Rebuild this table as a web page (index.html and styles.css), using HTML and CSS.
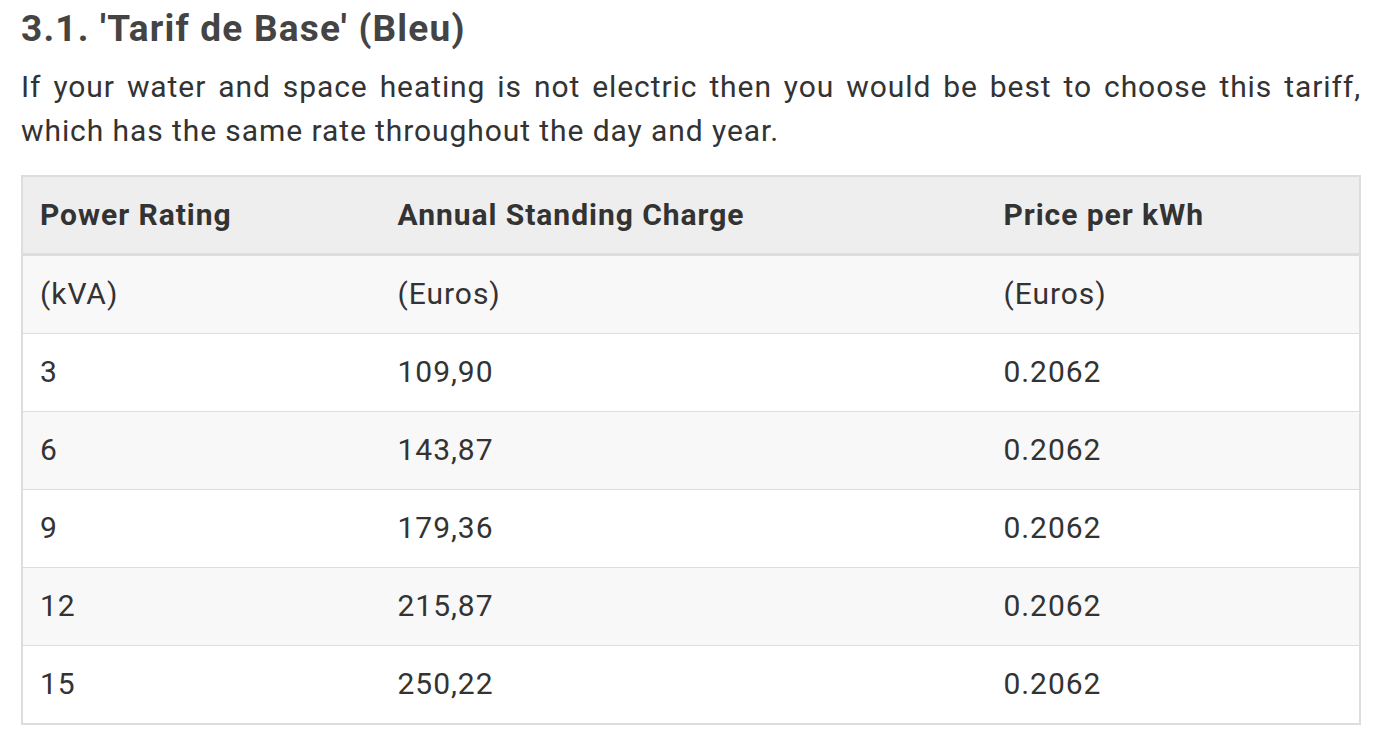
FILE: index.html
```html
<!DOCTYPE html>
<html lang="en">
<head>
<meta charset="utf-8">
<title>Tarif de Base</title>
<link rel="stylesheet" href="styles.css">
</head>
<body>
<div class="page">
  <h2 class="title">3.1. 'Tarif de Base' (Bleu)</h2>
  <p class="intro">If your water and space heating is not electric then you would be best to choose this tariff, which has the same rate throughout the day and year.</p>
  <table class="tariff">
    <colgroup>
      <col class="c1">
      <col class="c2">
      <col class="c3">
    </colgroup>
    <thead>
      <tr><th>Power Rating</th><th>Annual Standing Charge</th><th>Price per kWh</th></tr>
    </thead>
    <tbody>
      <tr><td>(kVA)</td><td>(Euros)</td><td>(Euros)</td></tr>
      <tr><td>3</td><td>109,90</td><td>0.2062</td></tr>
      <tr><td>6</td><td>143,87</td><td>0.2062</td></tr>
      <tr><td>9</td><td>179,36</td><td>0.2062</td></tr>
      <tr><td>12</td><td>215,87</td><td>0.2062</td></tr>
      <tr><td>15</td><td>250,22</td><td>0.2062</td></tr>
    </tbody>
  </table>
</div>
</body>
</html>
```
FILE: styles.css
```css
html, body {
  margin: 0;
  padding: 0;
  background: #fff;
}
body {
  font-family: Roboto, "Liberation Sans", sans-serif;
  color: #333;
}
.page {
  width: 1340px;
  padding: 7px 0 0 21px;
}
.title {
  margin: 0;
  font-size: 37px;
  line-height: 44px;
  font-weight: 700;
  letter-spacing: 1.2px;
  color: #444;
}
.intro {
  margin: 14px 0 0;
  font-size: 30px;
  line-height: 44px;
  letter-spacing: 0.92px;
  text-align: justify;
  color: #333;
}
.tariff {
  margin-top: 22px;
  width: 1340px;
  table-layout: fixed;
  border-collapse: collapse;
  border: 2px solid #ddd;
  font-size: 30px;
  line-height: 44px;
  letter-spacing: 0.96px;
  color: #333;
}
.c1 { width: 358px; }
.c2 { width: 605px; }
.c3 { width: 373px; }
.tariff th {
  text-align: left;
  font-weight: 700;
  background: #eee;
  padding: 16px 17px;
  border-bottom: 3px solid #ddd;
}
.tariff td {
  padding: 16px 17px 17px;
  border-top: 1px solid #ddd;
}
.tariff tbody tr:nth-child(odd) td {
  background: #f8f8f8;
}
.tariff tbody tr:first-child td {
  border-top: 0;
}
```
